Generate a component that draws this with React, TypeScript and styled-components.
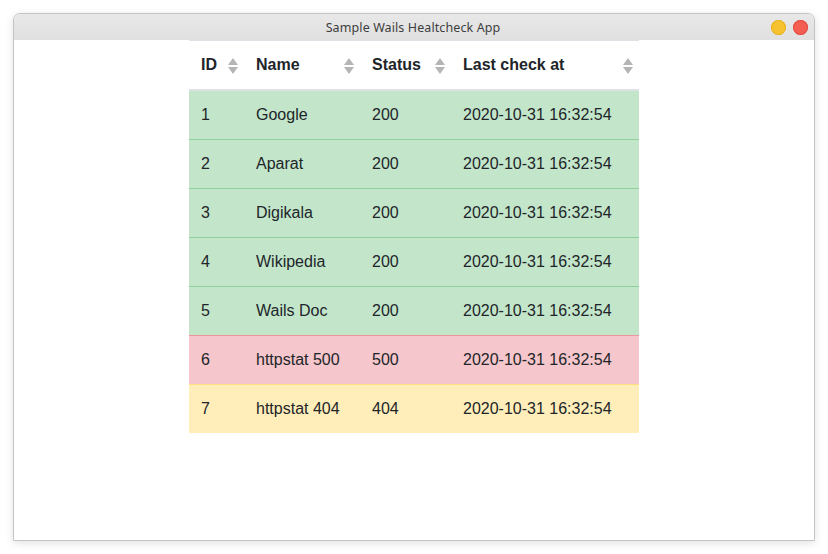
import React from "react";
import styled, { createGlobalStyle } from "styled-components";

const Global = createGlobalStyle`
  html, body { margin: 0; padding: 0; background: #ffffff; }
  body { font-family: "Liberation Sans", Arial, sans-serif; }
`;

const Page = styled.div`
  width: 828px;
  height: 554px;
  padding: 13px 13px 0 13px;
  box-sizing: border-box;
`;

const Window = styled.div`
  width: 802px;
  height: 528px;
  box-sizing: border-box;
  border: 1px solid #c4c4c4;
  border-radius: 7px 7px 0 0;
  box-shadow: 0 2px 8px rgba(0, 0, 0, 0.12);
  display: flex;
  flex-direction: column;
  overflow: hidden;
  background: #ffffff;
`;

const TitleBar = styled.div`
  height: 26px;
  flex: none;
  background: linear-gradient(#e8e8e8, #e0e0e0);
  display: grid;
  grid-template-columns: 1fr auto 1fr;
  align-items: center;
`;

const Title = styled.div`
  grid-column: 2;
  font-family: "Noto Sans", "Liberation Sans", sans-serif;
  font-size: 12.5px;
  color: #3e3e3e;
  letter-spacing: 0.1px;
  transform: translateX(-1px);
`;

const Controls = styled.div`
  grid-column: 3;
  justify-self: end;
  display: flex;
  gap: 7px;
  padding-right: 6px;
`;

const Dot = styled.span<{ $c: string; $b: string }>`
  width: 15px;
  height: 15px;
  border-radius: 50%;
  background: ${(p) => p.$c};
  box-shadow: inset 0 0 0 1px ${(p) => p.$b};
`;

const Content = styled.div`
  flex: 1;
  display: flex;
  justify-content: center;
  align-items: flex-start;
`;

const Table = styled.table`
  width: 450px;
  border-collapse: separate;
  border-spacing: 0;
  font-size: 16px;
  color: #212529;
  table-layout: fixed;
`;

const Th = styled.th<{ $w: number }>`
  width: ${(p) => p.$w}px;
  text-align: left;
  font-weight: 700;
  line-height: 24px;
  padding: 12px 6px 12px 12px;
  border-top: 1px solid #dee2e6;
  border-bottom: 2px solid #dee2e6;
  box-sizing: border-box;
`;

const ThInner = styled.div`
  display: flex;
  align-items: center;
  justify-content: space-between;
`;

const SortIcon = styled.svg`
  width: 10px;
  height: 16px;
  flex: none;
  margin-top: 1px;
`;

const palette = {
  success: { bg: "#c3e6cb", border: "#8fd19e" },
  danger: { bg: "#f5c6cb", border: "#ed969e" },
  warning: { bg: "#ffeeba", border: "#ffdf7e" },
};

type Variant = keyof typeof palette;

const Tr = styled.tr<{ $v: Variant }>`
  background: ${(p) => palette[p.$v].bg};
`;

const Td = styled.td<{ $v: Variant; $first: boolean }>`
  line-height: 24px;
  padding: 12px;
  border-top: ${(p) => (p.$first ? "none" : `1px solid ${palette[p.$v].border}`)};
  white-space: nowrap;
  overflow: hidden;
`;

const Sort = () => (
  <SortIcon viewBox="0 0 10 16">
    <polygon points="5,0 10,7 0,7" fill="#b5b5b5" />
    <polygon points="0,9 10,9 5,16" fill="#b5b5b5" />
  </SortIcon>
);

const cols = [
  { label: "ID", w: 55 },
  { label: "Name", w: 116 },
  { label: "Status", w: 91 },
  { label: "Last check at", w: 188 },
];

const rows: { id: number; name: string; status: number; v: Variant }[] = [
  { id: 1, name: "Google", status: 200, v: "success" },
  { id: 2, name: "Aparat", status: 200, v: "success" },
  { id: 3, name: "Digikala", status: 200, v: "success" },
  { id: 4, name: "Wikipedia", status: 200, v: "success" },
  { id: 5, name: "Wails Doc", status: 200, v: "success" },
  { id: 6, name: "httpstat 500", status: 500, v: "danger" },
  { id: 7, name: "httpstat 404", status: 404, v: "warning" },
];

export default function App() {
  return (
    <>
      <Global />
      <Page>
        <Window>
          <TitleBar>
            <Title>Sample Wails Healtcheck App</Title>
            <Controls>
              <Dot $c="#f7c22f" $b="#e8b223" />
              <Dot $c="#f45d52" $b="#e24c42" />
            </Controls>
          </TitleBar>
          <Content>
            <Table>
              <thead>
                <tr>
                  {cols.map((c) => (
                    <Th key={c.label} $w={c.w}>
                      <ThInner>
                        <span>{c.label}</span>
                        <Sort />
                      </ThInner>
                    </Th>
                  ))}
                </tr>
              </thead>
              <tbody>
                {rows.map((r, i) => (
                  <Tr key={r.id} $v={r.v}>
                    <Td $v={r.v} $first={i === 0}>{r.id}</Td>
                    <Td $v={r.v} $first={i === 0}>{r.name}</Td>
                    <Td $v={r.v} $first={i === 0}>{r.status}</Td>
                    <Td $v={r.v} $first={i === 0}>2020-10-31 16:32:54</Td>
                  </Tr>
                ))}
              </tbody>
            </Table>
          </Content>
        </Window>
      </Page>
    </>
  );
}
